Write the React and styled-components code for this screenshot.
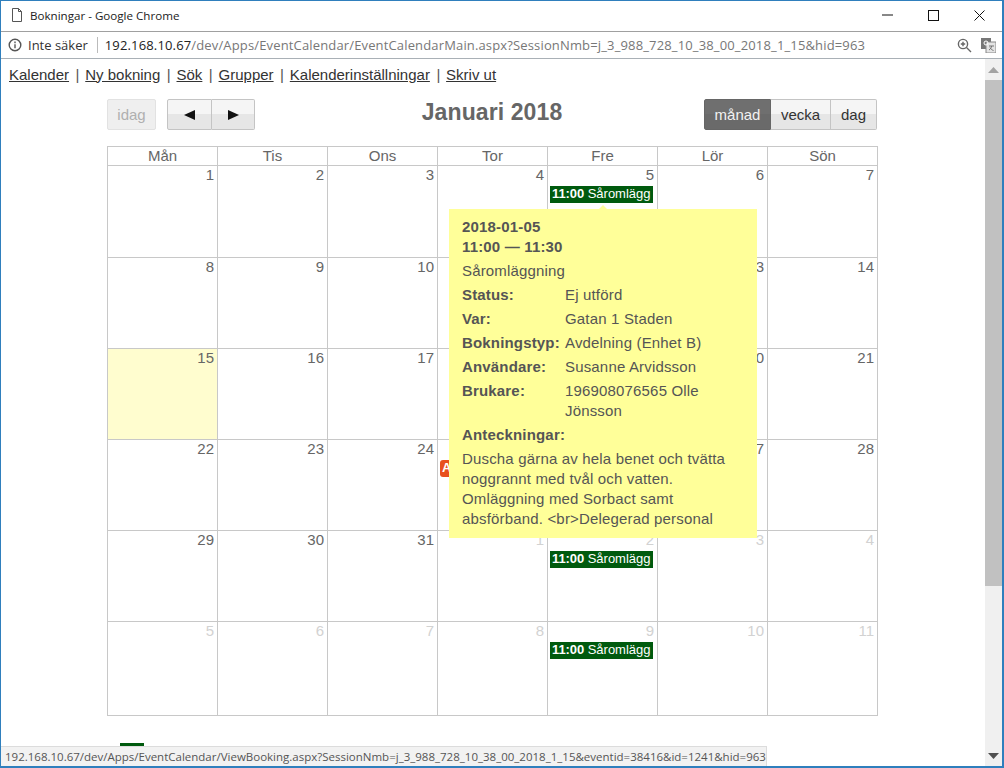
import React from "react";
import styled, { createGlobalStyle } from "styled-components";

const GlobalStyle = createGlobalStyle`
  html, body { margin: 0; padding: 0; background: #fff; overflow: hidden; }
  * { box-sizing: border-box; }
`;

const Window = styled.div`
  position: relative;
  width: 1004px;
  height: 768px;
  display: flex;
  flex-direction: column;
  border: 1px solid #2f7fbd;
  border-width: 1px 2px 2px 1px;
  overflow: hidden;
  background: #fff;
  font-family: "Liberation Sans", Arial, sans-serif;
`;

const TitleBar = styled.div`
  height: 31px;
  display: flex;
  align-items: center;
  padding: 0 0 2px 10px;
  border-bottom: 1px solid #a0a0a0;
  font-family: "Open Sans", "Noto Sans", sans-serif;
  font-size: 11.6px;
  color: #222;
`;

const TitleText = styled.span`
  margin-left: 7px;
  flex: 1;
`;

const WinButton = styled.div`
  width: 46px;
  height: 28px;
  display: flex;
  align-items: center;
  justify-content: center;
`;

const AddressBar = styled.div`
  height: 27px;
  display: flex;
  align-items: center;
  padding-left: 7px;
  border-bottom: 1px solid #a9b0b6;
  font-family: "Open Sans", "Noto Sans", sans-serif;
  font-size: 13px;
  color: #333;
`;

const SecureText = styled.span`
  margin-left: 6px;
  padding-right: 9px;
  border-right: 1px solid #bbb;
  line-height: 16px;
`;

const Url = styled.span`
  margin-left: 7px;
  flex: 1;
  color: #777;
  letter-spacing: 0.15px;
  white-space: nowrap;
  b { font-weight: 400; color: #222; }
`;

const AddressIcons = styled.div`
  display: flex;
  align-items: center;
  gap: 9px;
  padding-right: 6px;
`;

const Body = styled.div`
  flex: 1;
  display: flex;
  min-height: 0;
`;

const Main = styled.div`
  flex: 1;
  min-width: 0;
  overflow: hidden;
  color: #666;
`;

const Nav = styled.div`
  height: 32px;
  display: flex;
  align-items: center;
  padding: 0 0 2px 8px;
  font-size: 15px;
  color: #555;
  white-space: pre;
`;

const NavSep = styled.span`
  margin: 0 5.800px 0 6.500px;
`;

const NavLink = styled.a`
  color: #333;
  text-decoration: underline;
`;

const Calendar = styled.div`
  width: 770px;
  margin-left: 106px;
  position: relative;
`;

const Toolbar = styled.div`
  margin-top: 8px;
  height: 47px;
  display: grid;
  grid-template-columns: 1fr auto 1fr;
  align-items: start;
`;

const LeftTools = styled.div`
  display: flex;
  gap: 11px;
`;

const ButtonGroup = styled.div`
  display: flex;
`;

const RightTools = styled(ButtonGroup)`
  justify-content: flex-end;
`;

const MonthTitle = styled.h2`
  margin: -1px 0 0;
  font-size: 23px;
  line-height: 28px;
  font-weight: 700;
  color: #666;
  letter-spacing: 0.1px;
`;

const Button = styled.div`
  height: 31px;
  display: flex;
  align-items: center;
  justify-content: center;
  width: ${(p) => p.$w}px;
  font-size: 15px;
  color: ${(p) => (p.$active ? "#f2f2f2" : "#333")};
  background: ${(p) =>
    p.$active
      ? "linear-gradient(#6f6f6f 0 50%, #6a6a6a 50% 100%)"
      : "linear-gradient(#f5f5f5 0 50%, #e6e6e6 50% 100%)"};
  border: 1px solid ${(p) => (p.$active ? "#666" : "#c4c4c4")};
  border-left-width: ${(p) => (p.$joined ? 0 : 1)}px;
  border-radius: ${(p) => p.$radius || "0"};
`;

const TodayButton = styled(Button)`
  background: #efefef;
  color: #b0b0b0;
  border-color: #e2e2e2;
  border-radius: 2px;
`;

const Grid = styled.div`
  display: grid;
  grid-template-columns: repeat(7, 110px);
  border-left: 1px solid #c8c8c8;
  border-top: 1px solid #c8c8c8;
  width: 771px;
`;

const HeadCell = styled.div`
  height: 19px;
  line-height: 18px;
  text-align: center;
  font-size: 15px;
  color: #666;
  border-right: 1px solid #c8c8c8;
  border-bottom: 1px solid #c8c8c8;
`;

const DayCell = styled.div`
  height: ${(p) => p.$h}px;
  padding: 0 3px 0 2px;
  border-right: 1px solid #c8c8c8;
  border-bottom: 1px solid #c8c8c8;
  background: ${(p) => (p.$today ? "#fffdcf" : "#fff")};
`;

const DayNumber = styled.div`
  text-align: right;
  font-size: 15px;
  line-height: 17px;
  color: ${(p) => (p.$muted ? "#d2d2d2" : "#666")};
`;

const EventChip = styled.div`
  margin-top: 3px;
  height: 17px;
  width: 103px;
  background: ${(p) => p.$bg || "#005a0e"};
  color: #fff;
  font-size: 13px;
  line-height: 16px;
  padding-left: 2px;
  white-space: nowrap;
  overflow: hidden;
  border-radius: ${(p) => (p.$bg ? "3px" : "0")};
  b { font-size: 13px; letter-spacing: -0.1px; }
`;

const Tooltip = styled.div`
  position: absolute;
  left: 342px;
  top: 110px;
  width: 308px;
  height: 329px;
  padding: 8px 13px;
  background: #ffff99;
  color: #555;
  font-size: 15px;
  letter-spacing: 0.17px;
  line-height: 20px;

  &::before {
    content: "";
    position: absolute;
    left: 150px;
    top: -4px;
    border: 4px solid transparent;
    border-top: 0;
    border-bottom-color: #ffff99;
  }
`;

const TooltipHead = styled.div`
  font-weight: 700;
`;

const TooltipName = styled.div`
  margin-top: 4px;
`;

const InfoRow = styled.div`
  display: grid;
  grid-template-columns: 103px 1fr;
  margin-top: 4px;
  b { font-weight: 700; }
`;

const NotesLabel = styled.div`
  font-weight: 700;
  margin-top: 4px;
`;

const Notes = styled.div`
  margin-top: 4px;
`;

const Legend = styled.div`
  display: flex;
  gap: 16px;
  margin: 27px 0 0 13px;
  font-size: 13px;
  color: #333;
`;

const LegendSwatch = styled.div`
  width: 24px;
  height: 16px;
  background: #005a0e;
`;

const Scrollbar = styled.div`
  width: 17px;
  background: #f0f0f0;
  display: flex;
  flex-direction: column;
  align-items: stretch;
`;

const ScrollArrow = styled.div`
  height: 21px;
  display: flex;
  align-items: center;
  justify-content: center;
`;

const ScrollSpace = styled.div`
  flex: 1;
  min-height: 0;
`;

const ScrollThumb = styled.div`
  height: 506px;
  background: #c1c1c1;
`;

const StatusBar = styled.div`
  position: absolute;
  left: 0;
  bottom: 0;
  height: 20px;
  padding: 0 0 0 4px;
  display: flex;
  align-items: center;
  background: #f2f2f2;
  border-top: 1px solid #dcdcdc;
  border-right: 1px solid #dcdcdc;
  font-family: "Open Sans", "Noto Sans", sans-serif;
  font-size: 11.5px;
  color: #555;
`;

const dayHeads = ["Mån", "Tis", "Ons", "Tor", "Fre", "Lör", "Sön"];

const weeks = [
  { h: 92, days: [1, 2, 3, 4, 5, 6, 7] },
  { h: 91, days: [8, 9, 10, 11, 12, 13, 14] },
  { h: 91, days: [15, 16, 17, 18, 19, 20, 21] },
  { h: 91, days: [22, 23, 24, 25, 26, 27, 28] },
  { h: 91, days: [29, 30, 31, "m1", "m2", "m3", "m4"] },
  { h: 94, days: ["m5", "m6", "m7", "m8", "m9", "m10", "m11"] },
];

const eventDays = ["5", "m2", "m9"];

const navItems = ["Kalender", "Ny bokning", "Sök", "Grupper", "Kalenderinställningar", "Skriv ut"];

const DocIcon = () => (
  <svg width="12" height="14" viewBox="0 0 12 14" fill="none" stroke="#555" strokeWidth="1">
    <path d="M1.5 .5h6l3 3v10h-9z M7.5 .5v3h3" />
  </svg>
);

const InfoIcon = () => (
  <svg width="14" height="14" viewBox="0 0 14 14" fill="none" stroke="#555" strokeWidth="1.4">
    <circle cx="7" cy="7" r="5.8" />
    <path d="M7 6.2v4M7 3.6v1.6" />
  </svg>
);

const ZoomIcon = () => (
  <svg width="15" height="15" viewBox="0 0 15 15" fill="none" stroke="#666" strokeWidth="1.4">
    <circle cx="6" cy="6" r="4.6" />
    <path d="M9.5 9.5l4.5 4.5M3.8 6h4.4M6 3.8v4.4" />
  </svg>
);

const TranslateIcon = () => (
  <svg width="15" height="15" viewBox="0 0 15 15">
    <rect x="0" y="0" width="10" height="11" fill="#777" />
    <rect x="5" y="4" width="10" height="11" fill="#e4e4e4" stroke="#888" strokeWidth="1" />
    <circle cx="5" cy="5" r="2" fill="none" stroke="#fff" strokeWidth="1" />
    <path d="M8 8h5M10.5 8c0 2-1 3-2.5 4M9 9.500c.6 1.500 2 2.500 3.500 3" fill="none" stroke="#666" strokeWidth="0.9" />
  </svg>
);

const Triangle = ({ dir }) => (
  <svg width="16" height="10" viewBox="0 0 16 10">
    <path d={dir === "left" ? "M2 5l11-5v10z" : "M14 5L3 0v10z"} fill="#111" />
  </svg>
);

const ScrollTriangle = ({ dir, color }) => (
  <svg width="11" height="6" viewBox="0 0 11 6">
    <path d={dir === "up" ? "M5.500 0L11 6H0z" : "M5.500 6L0 0h11z"} fill={color} />
  </svg>
);

const App = () => {
  return (
    <Window>
      <GlobalStyle />
      <TitleBar>
        <DocIcon />
        <TitleText>Bokningar - Google Chrome</TitleText>
        <WinButton>
          <svg width="11" height="2" viewBox="0 0 11 2"><path d="M0 1h11" stroke="#111" /></svg>
        </WinButton>
        <WinButton>
          <svg width="11" height="11" viewBox="0 0 11 11"><rect x=".5" y=".5" width="10" height="10" fill="none" stroke="#111" /></svg>
        </WinButton>
        <WinButton>
          <svg width="11" height="11" viewBox="0 0 11 11"><path d="M.5 .5l10 10M10.500 .5l-10 10" stroke="#111" /></svg>
        </WinButton>
      </TitleBar>
      <AddressBar>
        <InfoIcon />
        <SecureText>Inte säker</SecureText>
        <Url><b>192.168.10.67</b>/dev/Apps/EventCalendar/EventCalendarMain.aspx?SessionNmb=j_3_988_728_10_38_00_2018_1_15&amp;hid=963</Url>
        <AddressIcons>
          <ZoomIcon />
          <TranslateIcon />
        </AddressIcons>
      </AddressBar>
      <Body>
        <Main>
          <Nav>
            {navItems.map((item, i) => (
              <React.Fragment key={item}>
                {i > 0 && <NavSep>|</NavSep>}
                <NavLink>{item}</NavLink>
              </React.Fragment>
            ))}
          </Nav>
          <Calendar>
            <Toolbar>
              <LeftTools>
                <TodayButton $w={49}>idag</TodayButton>
                <ButtonGroup>
                  <Button $w={45} $radius="2px 0 0 2px"><Triangle dir="left" /></Button>
                  <Button $w={43} $joined $radius="0 2px 2px 0"><Triangle dir="right" /></Button>
                </ButtonGroup>
              </LeftTools>
              <MonthTitle>Januari 2018</MonthTitle>
              <RightTools>
                <Button $w={67} $active $radius="2px 0 0 2px">månad</Button>
                <Button $w={60} $joined>vecka</Button>
                <Button $w={46} $joined $radius="0 2px 2px 0">dag</Button>
              </RightTools>
            </Toolbar>
            <Grid>
              {dayHeads.map((d) => <HeadCell key={d}>{d}</HeadCell>)}
              {weeks.map((week) =>
                week.days.map((day) => {
                  const key = String(day);
                  const muted = key.startsWith("m");
                  return (
                    <DayCell key={key} $h={week.h} $today={day === 15}>
                      <DayNumber $muted={muted}>{muted ? key.slice(1) : day}</DayNumber>
                      {eventDays.includes(key) && (
                        <EventChip><b>11:00</b> Såromlägg</EventChip>
                      )}
                      {day === 25 && <EventChip $bg="#e8501e"><b>A</b></EventChip>}
                    </DayCell>
                  );
                })
              )}
            </Grid>
            <Legend>
              <LegendSwatch />
              <span>Ej utförd bokning</span>
            </Legend>
            <Tooltip>
              <TooltipHead>2018-01-05</TooltipHead>
              <TooltipHead>11:00 — 11:30</TooltipHead>
              <TooltipName>Såromläggning</TooltipName>
              <InfoRow><b>Status:</b><span>Ej utförd</span></InfoRow>
              <InfoRow><b>Var:</b><span>Gatan 1 Staden</span></InfoRow>
              <InfoRow><b>Bokningstyp:</b><span>Avdelning (Enhet B)</span></InfoRow>
              <InfoRow><b>Användare:</b><span>Susanne Arvidsson</span></InfoRow>
              <InfoRow><b>Brukare:</b><span>196908076565 Olle Jönsson</span></InfoRow>
              <NotesLabel>Anteckningar:</NotesLabel>
              <Notes>Duscha gärna av hela benet och tvätta noggrannt med tvål och vatten. Omläggning med Sorbact samt absförband. &lt;br&gt;Delegerad personal</Notes>
            </Tooltip>
          </Calendar>
        </Main>
        <Scrollbar>
          <ScrollArrow><ScrollTriangle dir="up" color="#a3a3a3" /></ScrollArrow>
          <ScrollThumb />
          <ScrollSpace />
          <ScrollArrow><ScrollTriangle dir="down" color="#505050" /></ScrollArrow>
        </Scrollbar>
      </Body>
      <StatusBar>192.168.10.67/dev/Apps/EventCalendar/ViewBooking.aspx?SessionNmb=j_3_988_728_10_38_00_2018_1_15&amp;eventid=38416&amp;id=1241&amp;hid=963</StatusBar>
    </Window>
  );
};

export default App;
